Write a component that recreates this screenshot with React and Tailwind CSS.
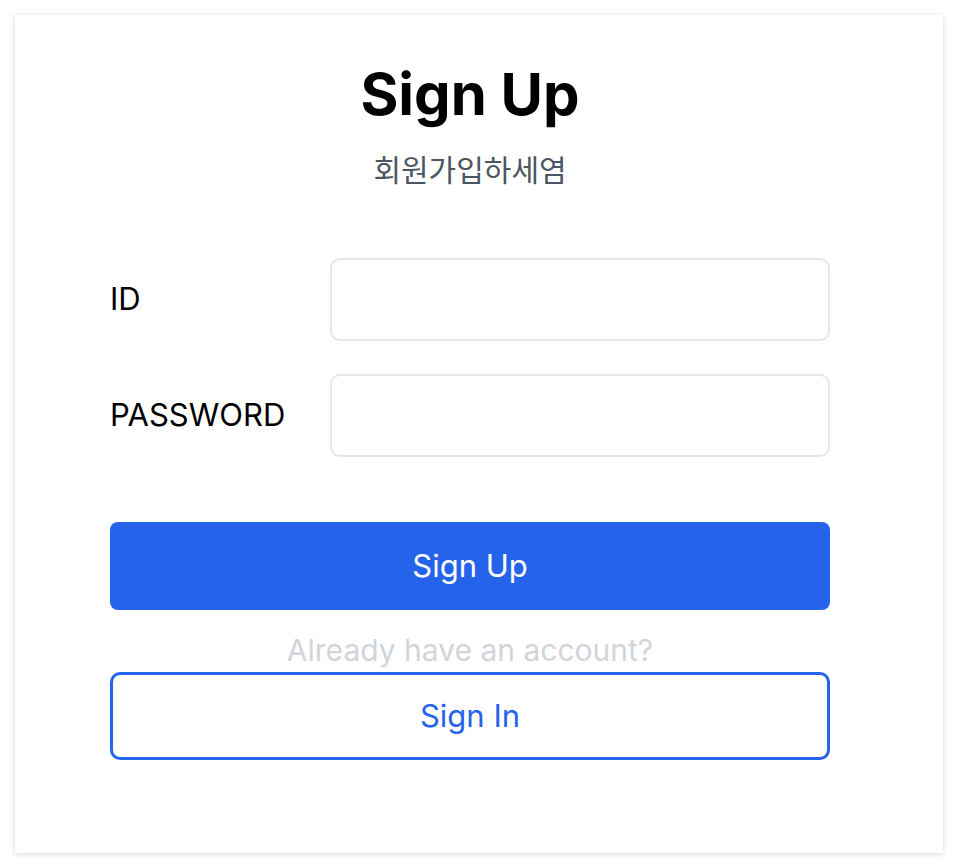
export default function App() {
  return (
    <div className="min-h-screen bg-white p-[15px] font-['Inter','Noto_Sans_CJK_KR',sans-serif]">
      <div className="h-[838px] bg-white pl-[95px] pr-[113px] pt-[50px] shadow-[0_1px_6px_rgba(0,0,0,0.16)]">
        {/* Header */}
        <h1 className="text-center text-[58px] font-bold leading-[58px] text-black">Sign Up</h1>
        <p className="mt-[29px] text-center text-[30px] leading-[36px] text-[#4b5563]">회원가입하세염</p>

        {/* Form */}
        <div className="mt-[70px] flex flex-col gap-[33px]">
          <div className="flex items-center">
            <label className="w-[220px] text-[31px] text-black">ID</label>
            <input className="h-[83px] flex-1 rounded-[10px] border-2 border-[#e5e7eb] px-4 text-[24px] outline-none" />
          </div>
          <div className="flex items-center">
            <label className="w-[220px] text-[31px] text-black">PASSWORD</label>
            <input type="password" className="h-[83px] flex-1 rounded-[10px] border-2 border-[#e5e7eb] px-4 text-[24px] outline-none" />
          </div>
        </div>

        <button className="mt-[65px] flex h-[88px] w-full items-center justify-center rounded-[8px] bg-[#2563eb] text-[31px] text-white">
          Sign Up
        </button>
        <p className="mt-[20px] h-[42px] text-center text-[30px] leading-[40px] text-[#d1d5db]">Already have an account?</p>
        <button className="flex h-[88px] w-full items-center justify-center rounded-[10px] border-[3px] border-[#2563eb] bg-white text-[31px] text-[#2563eb]">
          Sign In
        </button>
      </div>
    </div>
  );
}
